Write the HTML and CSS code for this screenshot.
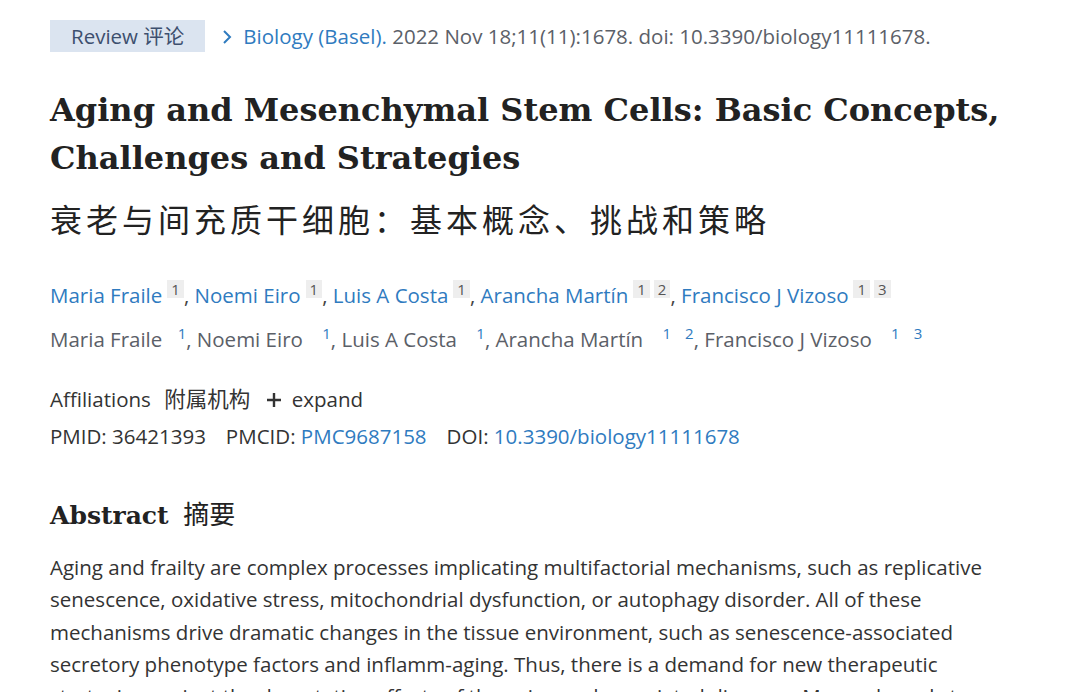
FILE: index.html
```html
<!DOCTYPE html>
<html lang="en">
<head>
    <meta charset="UTF-8">
    <meta name="viewport" content="width=device-width, initial-scale=1.0">
    <title>Aging and Mesenchymal Stem Cells</title>
    <link rel="stylesheet" href="styles.css">
</head>
<body>
    <div class="article">
        <div class="header-row">
            <span class="type-badge">Review 评论</span>
            <span class="citation"><svg class="chevron" width="12" height="16" viewBox="0 0 12 16"><path d="M3 2 L9 8 L3 14" fill="none" stroke="#2f7bbf" stroke-width="2"/></svg><a href="#">Biology (Basel).</a> 2022 Nov 18;11(11):1678. doi: 10.3390/biology11111678.</span>
        </div>

        <h1 class="title">Aging and Mesenchymal Stem Cells: Basic Concepts, Challenges and Strategies</h1>
        <div class="title-zh">衰老与间充质干细胞：基本概念、挑战和策略</div>

        <div class="authors">
            <a href="#">Maria Fraile</a><sup class="aff">1</sup>,
            <a href="#">Noemi Eiro</a><sup class="aff">1</sup>,
            <a href="#">Luis A Costa</a><sup class="aff">1</sup>,
            <a href="#">Arancha Martín</a><sup class="aff">1</sup><sup class="aff">2</sup>,
            <a href="#">Francisco J Vizoso</a><sup class="aff">1</sup><sup class="aff">3</sup>
        </div>
        <div class="authors plain">
            Maria Fraile <sup>1</sup>, Noemi Eiro <sup>1</sup>, Luis A Costa <sup>1</sup>, Arancha Martín <sup>1</sup><sup>2</sup>, Francisco J Vizoso <sup>1</sup><sup>3</sup>
        </div>

        <div class="affiliations">
            Affiliations <span class="zh">附属机构</span>
            <span class="expand"><svg class="plus" width="16" height="16" viewBox="0 0 16 16"><path d="M8 1 V15 M1 8 H15" stroke="#333" stroke-width="2.4"/></svg> expand</span>
        </div>
        <div class="ids">
            <span>PMID: 36421393</span>
            <span>PMCID: <a href="#">PMC9687158</a></span>
            <span>DOI: <a href="#">10.3390/biology11111678</a></span>
        </div>

        <h2 class="abstract-title">Abstract <span class="zh">摘要</span></h2>
        <p class="abstract">Aging and frailty are complex processes implicating multifactorial mechanisms, such as replicative senescence, oxidative stress, mitochondrial dysfunction, or autophagy disorder. All of these mechanisms drive dramatic changes in the tissue environment, such as senescence-associated secretory phenotype factors and inflamm-aging. Thus, there is a demand for new therapeutic strategies against the devastating effects of the aging and associated diseases. Mesenchymal stem cells (MSCs) participate in tissue homeostasis.</p>
    </div>
</body>
</html>
```

FILE: styles.css
```css
body {
    margin: 0;
    padding: 0;
    background: #ffffff;
    font-family: "Open Sans", "Noto Sans CJK SC", sans-serif;
    font-size: 20.5px;
    color: #333333;
}

a {
    color: #2f7bbf;
    text-decoration: none;
}

.article {
    padding: 20px 50px 0 50px;
    width: 960px;
}

.header-row {
    display: flex;
    align-items: center;
    gap: 16px;
    height: 32px;
}

.type-badge {
    background: #dbe4f0;
    color: #3d4f6e;
    height: 32px;
    line-height: 33px;
    padding: 0 21px;
}

.citation {
    color: #5b6068;
    line-height: 33px;
    white-space: nowrap;
}

.chevron {
    vertical-align: -1px;
    margin-right: 10px;
}

.title {
    font-family: "DejaVu Serif", serif;
    font-weight: bold;
    font-size: 32px;
    line-height: 48px;
    color: #222222;
    margin: 34px 0 0 0;
}

.title-zh {
    font-family: "Noto Sans CJK SC", serif;
    font-size: 32px;
    letter-spacing: 4px;
    color: #222222;
    line-height: 48px;
    margin-top: 12px;
}

.authors {
    line-height: 32px;
    margin-top: 37px;
    color: #444444;
}

.authors .aff {
    display: inline-block;
    background: #eeeeee;
    color: #555555;
    font-size: 15px;
    line-height: 18px;
    padding: 0 4px;
    margin-left: 5px;
    vertical-align: 8px;
}

.authors .aff + .aff {
    margin-left: 4px;
}

.authors.plain {
    margin-top: 6px;
    color: #5b6068;
}

.authors.plain sup {
    color: #2f7bbf;
    font-size: 15px;
    margin-left: 10px;
}

.authors.plain sup + sup {
    margin-left: 14px;
}

.affiliations {
    margin-top: 28px;
    line-height: 32px;
    color: #333333;
}

.affiliations .zh {
    margin-left: 8px;
    font-size: 21.5px;
}

.expand {
    margin-left: 10px;
}

.plus {
    vertical-align: -1px;
    margin-right: 5px;
}

.ids {
    line-height: 32px;
    margin-top: 5px;
    display: flex;
    gap: 20px;
}

.abstract-title {
    font-family: "DejaVu Serif", serif;
    font-weight: bold;
    font-size: 25px;
    color: #222222;
    margin: 41px 0 0 0;
    line-height: 40px;
}

.abstract-title .zh {
    font-weight: normal;
    font-family: "Noto Sans CJK SC", serif;
    font-size: 26px;
    margin-left: 6px;
}

.abstract {
    line-height: 32.4px;
    margin: 15px 0 0 0;
    color: #333333;
}
```
